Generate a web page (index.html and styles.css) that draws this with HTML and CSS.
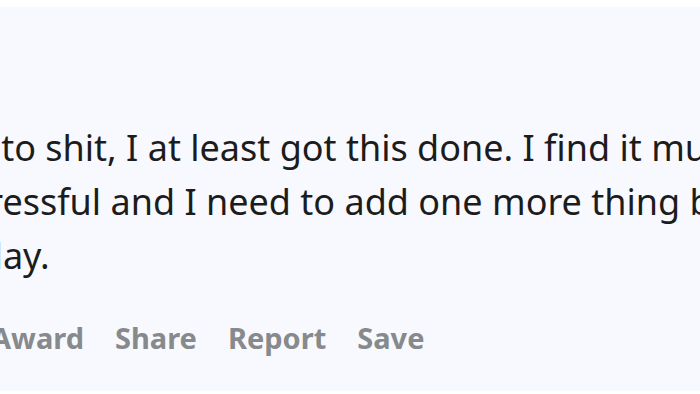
FILE: index.html
```html
<!DOCTYPE html>
<html>
<head>
<meta charset="utf-8">
<link rel="stylesheet" href="styles.css">
</head>
<body>
<div class="comment">
  <div class="body">
    <div class="line l1">went to shit, I at least got this done. I find it much more</div>
    <div class="line l2">stressful and I need to add one more thing before</div>
    <div class="line l3">today.</div>
  </div>
  <div class="actions">
    <span class="act a1">Award</span>
    <span class="act">Share</span>
    <span class="act">Report</span>
    <span class="act">Save</span>
  </div>
</div>
</body>
</html>
```
FILE: styles.css
```css
html, body {
  margin: 0;
  padding: 0;
  background: #ffffff;
}
body {
  width: 700px;
  height: 394px;
  overflow: hidden;
}
.comment {
  margin-top: 7px;
  height: 384px;
  background: #f8f9fe;
  overflow: hidden;
  padding-top: 114px;
  box-sizing: border-box;
}
.body {
  font-family: "Noto Sans", sans-serif;
  font-size: 36px;
  line-height: 54px;
  color: #1c1c1c;
}
.line {
  white-space: nowrap;
}
.l1 { margin-left: -92px; }
.l2 { margin-left: -42px; }
.l3 { margin-left: -54px; }
.actions {
  margin-top: 35px;
  display: flex;
  gap: 31px;
  margin-left: -9px;
  font-family: "Noto Sans", sans-serif;
  font-weight: 700;
  font-size: 29px;
  line-height: 40px;
  color: #878a8c;
  white-space: nowrap;
}
```
